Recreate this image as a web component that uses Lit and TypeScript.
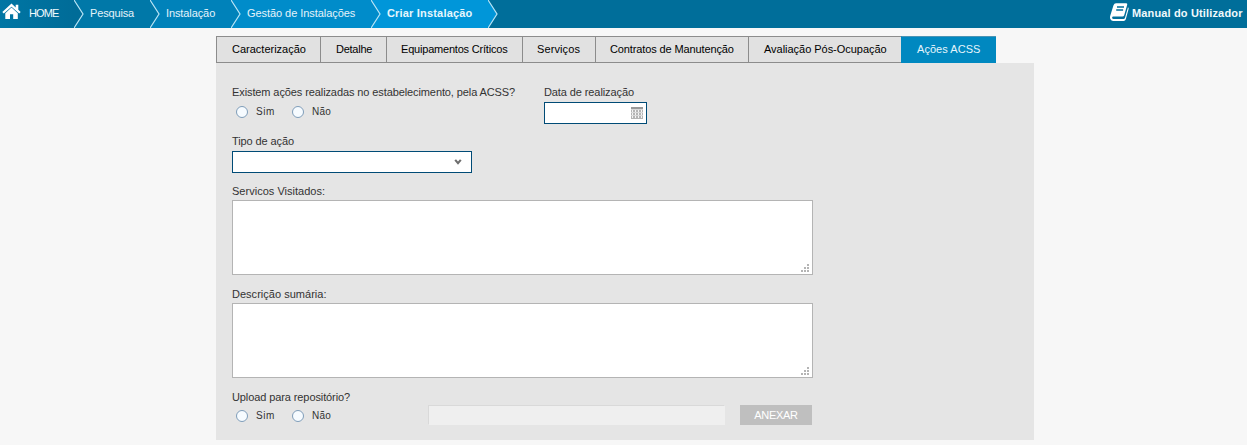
import { LitElement, html, css, svg } from "lit";
import { customElement, property } from "lit/decorators.js";
import { classMap } from "lit/directives/class-map.js";

@customElement("nav-crumbs")
class NavCrumbs extends LitElement {
  static styles = css`
    :host { display: block; }
    .bar { display: flex; height: 28px; background: #006e9a; color: #e4f3fa; font-size: 11px; line-height: 27px; white-space: nowrap; }
    .crumb { display: flex; height: 28px; box-sizing: border-box; }
    .crumb svg { flex: none; width: 10px; height: 28px; }
    .c0 { width: 74px; background: linear-gradient(90deg, #0076a4, #006c98); color: #f2fafd; letter-spacing: -0.9px; }
    .c1 { width: 76px; background: #0078a8; letter-spacing: -0.15px; }
    .c2 { width: 81px; background: #0082ba; letter-spacing: -0.1px; }
    .c3 { width: 140px; background: #008cca; letter-spacing: -0.06px; }
    .c4 { width: 117px; background: #0096d9; font-weight: bold; color: #e6f6fd; letter-spacing: 0.18px; }
    .c0 .house { width: 20px; margin: 0 7px 0 2px; }
    .c1 .t, .c2 .t, .c3 .t, .c4 .t { margin-left: 6px; }
    .f0 { fill: #006c98; } .f1 { fill: #0078a8; } .f2 { fill: #0082ba; } .f3 { fill: #008cca; } .f4 { fill: #0096d9; }
    .line { fill: none; stroke: #b9e4f5; stroke-width: 1.2; }
    .end { flex: 1; }
    .end svg { display: block; width: 10px; height: 28px; }
    .manual { display: flex; font-weight: bold; color: #f0f9fc; padding-right: 5px; letter-spacing: 0.15px; }
    .manual svg { width: 21px; height: 28px; margin-right: 2px; }
    .manual .t { width: 110px; }
    .w { fill: #fff; }
  `;
  arrow(i: number) {
    return html`<svg viewBox="0 0 10 28"><path class="f${i}" d="M0 0L9 14L0 28Z"/><path class="line" d="M0 0L9 14L0 28"/></svg>`;
  }
  render() {
    const items = ["Pesquisa", "Instalação", "Gestão de Instalações", "Criar Instalação"];
    return html`<nav class="bar">
      <div class="crumb c0">
        <svg class="house" viewBox="0 0 20 28"><path class="w" d="M9.5 3.6L0.3 12L1.8 13.6L9.5 6.7L17.2 13.6L18.7 12L16.3 9.8V4.8H13.7V7.4Z"/><path class="w" d="M9.5 7.6L3.3 13.3V19H8V14.3H11.2V19H15.8V13.3Z"/></svg>
        <span class="t">HOME</span>
      </div>
      ${items.map((t, i) => html`<div class="crumb c${i + 1}">${this.arrow(i)}<span class="t">${t}</span></div>`)}
      <div class="end">${this.arrow(4)}</div>
      <div class="manual">
        <svg viewBox="0 0 21 28"><path class="w" d="M7 3.2H17.3Q18.6 3.3 18.2 4.8L15.2 15.2Q14.8 16.6 13.4 16.6H3.8Q2.8 17 3.2 18.3Q3.5 19 4.5 19H14.6Q15.6 19 16 17.8L19 7.3Q19.9 7.8 19.6 9L16.8 19.3Q16.3 21 14.6 21H4Q1.8 21 1.1 18.6Q.8 17 1.3 15.6L4.5 5.2Q5.2 3.3 7 3.2Z"/><path d="M8 7H15M7.2 10H14.1" stroke="#006e9a" stroke-width="1.3"/></svg>
        <span class="t">Manual do Utilizador</span>
      </div>
    </nav>`;
  }
}

@customElement("tab-strip")
class TabStrip extends LitElement {
  static styles = css`
    :host { display: block; }
    .tabs { display: flex; font-size: 11px; line-height: 25px; color: #000; white-space: nowrap; }
    .tab { height: 27px; box-sizing: border-box; border: 1px solid #8c8c8c; border-right: 0; background: #e1e1e1; padding-left: 15px; }
    .active { background: #0088c0; border-color: #0088c0; border-top-color: #4a93b4; color: #e6f5fc; }
    .t0 { width: 104px; }
    .t1 { width: 66px; letter-spacing: -0.25px; }
    .t2 { width: 136px; padding-left: 14px; letter-spacing: -0.2px; }
    .t3 { width: 73px; padding-left: 14px; letter-spacing: 0.1px; }
    .t4 { width: 153px; padding-left: 14px; letter-spacing: -0.12px; }
    .t5 { width: 153px; letter-spacing: -0.03px; }
    .t6 { width: 95px; letter-spacing: 0.05px; }
  `;
  render() {
    const tabs = ["Caracterização", "Detalhe", "Equipamentos Críticos", "Serviços", "Contratos de Manutenção", "Avaliação Pós-Ocupação", "Ações ACSS"];
    return html`<div class="tabs">${tabs.map((t, i) => html`<div class=${classMap({ tab: true, active: i === 6, ["t" + i]: true })}><span>${t}</span></div>`)}</div>`;
  }
}

@customElement("radio-pair")
class RadioPair extends LitElement {
  static styles = css`
    :host { display: block; }
    .row { display: flex; height: 14px; padding-left: 4px; align-items: center; font-size: 10px; line-height: 14px; color: #333; }
    .dot { box-sizing: border-box; width: 12px; height: 12px; border: 1px solid #7f9db9; border-radius: 50%; background: #f6fbff; margin-right: 8px; }
    .a { width: 36px; letter-spacing: .5px; }
    .b { letter-spacing: .2px; }
  `;
  render() {
    return html`<div class="row"><i class="dot"></i><span class="a">Sim</span><i class="dot"></i><span class="b">Não</span></div>`;
  }
}

@customElement("text-area")
class TextArea extends LitElement {
  @property() label = "";
  static styles = css`
    :host { display: block; }
    .label { line-height: 14px; height: 16px; }
    .box { display: flex; justify-content: flex-end; align-items: flex-end; box-sizing: border-box; width: 581px; height: 75px; border: 1px solid #b4b4b4; background: #fff; padding: 0 3px 2px 0; }
    .box svg { width: 8px; height: 8px; fill: #b4b4b4; }
  `;
  render() {
    return html`<div class="label">${this.label}</div><div class="box"><svg viewBox="0 0 8 8" shape-rendering="crispEdges">${[[6, 0], [3, 3], [6, 3], [0, 6], [3, 6], [6, 6]].map(([x, y]) => svg`<rect x=${x} y=${y} width="2" height="2"/>`)}</svg></div>`;
  }
}

@customElement("app-root")
class AppRoot extends LitElement {
  static styles = css`
    :host { display: block; height: 445px; overflow: hidden; background: #f7f7f7; font-family: "Liberation Sans", Arial, sans-serif; font-size: 11px; color: #333; }
    .main { width: 818px; margin: 8px 0 0 216px; }
    .panel { height: 377px; box-sizing: border-box; background: #e5e5e5; padding: 22px 16px 0; }
    .top { display: grid; grid-template-columns: 312px auto; height: 49px; }
    .label { line-height: 14px; height: 17px; white-space: nowrap; letter-spacing: -0.1px; }
    .field { display: flex; justify-content: flex-end; align-items: center; box-sizing: border-box; height: 22px; border: 1px solid #004b76; background: #fff; }
    .date { width: 103px; padding-right: 3px; }
    .date svg { width: 12px; height: 12px; }
    .radios { margin-top: 3px; }
    .radios.low { margin-top: 2px; }
    .type { height: 50px; }
    .select { width: 240px; padding-right: 9px; }
    .select svg { width: 8px; height: 8px; }
    .area { height: 103px; letter-spacing: 0.02px; }
    .upload { display: grid; grid-template-columns: 196px 297px 72px; }
    .file { margin-top: 15px; box-sizing: border-box; height: 20px; background: #efefef; border: 1px solid #d9d9d9; border-right-color: #efefef; border-bottom-color: #efefef; }
    .btn { margin: 15px 0 0 15px; width: 72px; height: 20px; line-height: 20px; background: #bfbfbf; color: #fff; text-align: center; letter-spacing: -0.3px; }
  `;
  render() {
    return html`
      <nav-crumbs></nav-crumbs>
      <div class="main">
        <tab-strip></tab-strip>
        <div class="panel">
          <div class="top">
            <div><div class="label"><span>Existem ações realizadas no estabelecimento, pela ACSS?</span></div><radio-pair class="radios"></radio-pair></div>
            <div><div class="label"><span>Data de realização</span></div>
              <div class="field date"><svg viewBox="0 0 12 12" shape-rendering="crispEdges"><rect width="12" height="12" fill="#b4b4b4"/><rect width="12" height="2" fill="#999"/>${[3, 6, 9].map(y => [1, 4, 7, 10].map(x => svg`<rect x=${x} y=${y} width="1" height="2" fill="#f4f4f4"/>`))}<path d="M0 2.5H12M0 5.5H12M0 8.5H12" stroke="#d8d8d8"/></svg></div></div>
          </div>
          <div class="type">
            <div class="label">Tipo de ação</div>
            <div class="field select"><svg viewBox="0 0 8 8"><path d="M1.2 1.8L4 5.2L6.8 1.8" fill="none" stroke="#6e6e6e" stroke-width="2.1"/></svg></div>
          </div>
          <text-area class="area" label="Servicos Visitados:"></text-area>
          <text-area class="area" label="Descrição sumária:"></text-area>
          <div class="upload">
            <div><div class="label">Upload para repositório?</div><radio-pair class="radios low"></radio-pair></div>
            <div class="file"></div>
            <div class="btn">ANEXAR</div>
          </div>
        </div>
      </div>`;
  }
}
